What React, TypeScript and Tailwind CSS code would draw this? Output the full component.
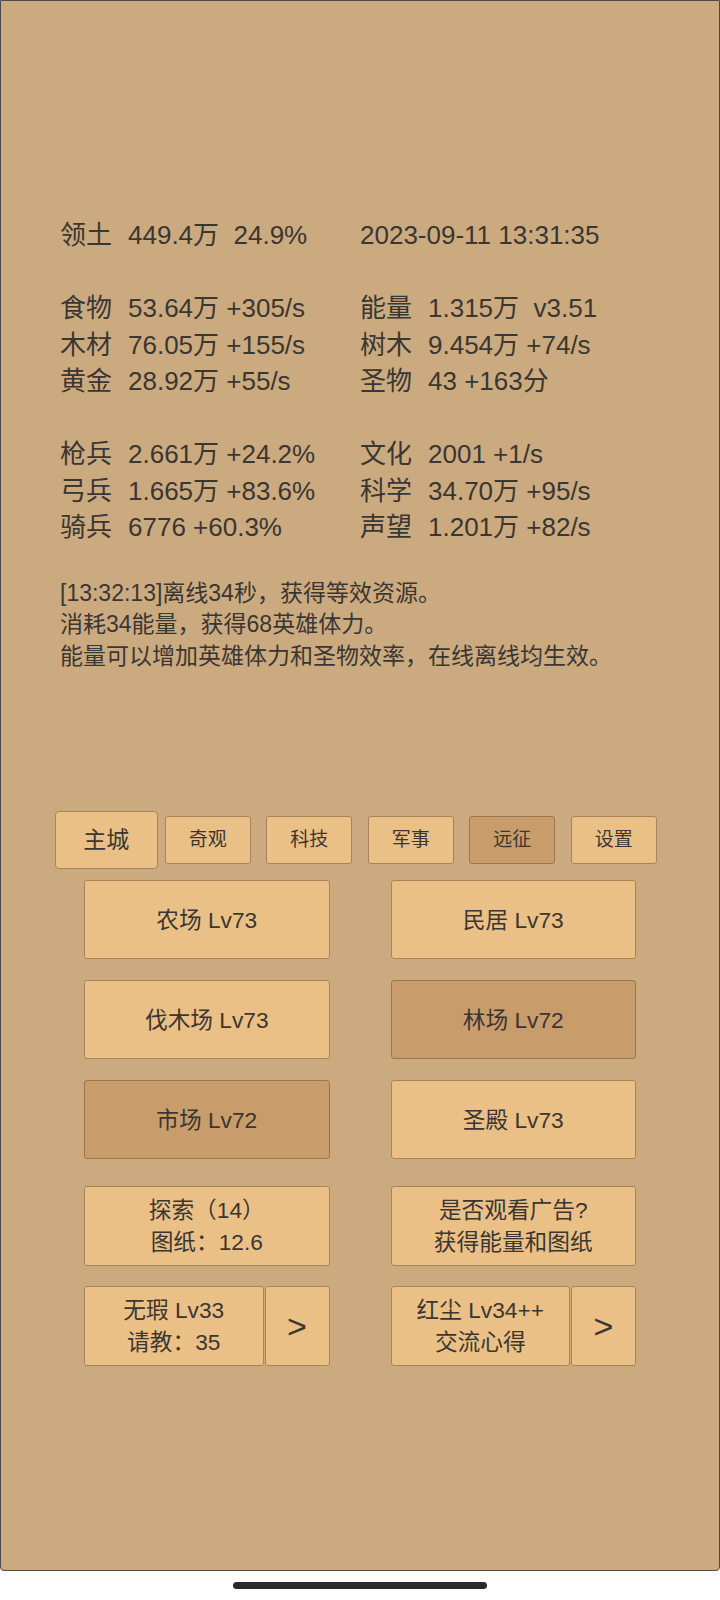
import React from 'react';

type Cell = [string, string] | null;

const rows: (Cell[] | null)[] = [
  [['领土', '449.4万  24.9%'], ['', '2023-09-11 13:31:35']],
  null,
  [['食物', '53.64万 +305/s'], ['能量', '1.315万  v3.51']],
  [['木材', '76.05万 +155/s'], ['树木', '9.454万 +74/s']],
  [['黄金', '28.92万 +55/s'], ['圣物', '43 +163分']],
  null,
  [['枪兵', '2.661万 +24.2%'], ['文化', '2001 +1/s']],
  [['弓兵', '1.665万 +83.6%'], ['科学', '34.70万 +95/s']],
  [['骑兵', '6776 +60.3%'], ['声望', '1.201万 +82/s']],
];

const tabs = ['奇观', '科技', '军事', '远征', '设置'];

const buildings = [
  { name: '农场 Lv73', dark: false },
  { name: '民居 Lv73', dark: false },
  { name: '伐木场 Lv73', dark: false },
  { name: '林场 Lv72', dark: true },
  { name: '市场 Lv72', dark: true },
  { name: '圣殿 Lv73', dark: false },
];

const light = 'bg-[#ebc087] border border-[#a8845a] rounded-[3px]';
const dark = 'bg-[#c99c6b] border border-[#9a7550] rounded-[3px]';

function StatCell({ cell }: { cell: Cell }) {
  if (!cell) return <div />;
  const [label, value] = cell;
  return (
    <div className="flex whitespace-pre">
      {label && <span className="w-[68px] shrink-0">{label}</span>}
      <span>{value}</span>
    </div>
  );
}

export default function App() {
  return (
    <div
      className="w-[720px] bg-white text-[#3a3632]"
      style={{ fontFamily: '"Liberation Sans", "Noto Sans CJK SC", sans-serif' }}
    >
      <div className="h-[1571px] border border-[#4a4a4a] bg-[#cbaa80] rounded-b-[4px] pt-[216px]">
        <div className="pl-[59px] text-[26px] leading-[36.5px]">
          {rows.map((r, i) =>
            r ? (
              <div key={i} className="grid grid-cols-[300px_1fr]">
                <StatCell cell={r[0]} />
                <StatCell cell={r[1]} />
              </div>
            ) : (
              <div key={i} className="h-[36.5px]" />
            )
          )}
        </div>

        <div className="pl-[59px] mt-[32px] text-[23px] leading-[31.6px]">
          <div>[13:32:13]离线34秒，获得等效资源。</div>
          <div>消耗34能量，获得68英雄体力。</div>
          <div>能量可以增加英雄体力和圣物效率，在线离线均生效。</div>
        </div>

        <div className="mt-[139px] flex justify-center">
          <div className="w-[101.5px] h-[58px] flex justify-center items-center">
            <button className={`${light} w-[103px] h-[58px] shrink-0 text-[23px] rounded-[4px]`}>主城</button>
          </div>
          {tabs.map((t) => (
            <div key={t} className="w-[101.5px] h-[58px] flex justify-center items-center">
              <button className={`${t === '远征' ? dark : light} w-[86px] h-[48px] text-[19px]`}>{t}</button>
            </div>
          ))}
        </div>

        <div className="mt-[11px] mx-auto w-[552px] grid grid-cols-2 gap-x-[61px] gap-y-[21px]">
          {buildings.map((b) => (
            <button key={b.name} className={`${b.dark ? dark : light} h-[79px] text-[22.7px]`}>
              {b.name}
            </button>
          ))}
        </div>

        <div className="mt-[27px] mx-auto w-[552px] grid grid-cols-2 gap-x-[61px] text-[22.7px] leading-[32px]">
          <button className={`${light} h-[80px]`}>
            <div>探索（14）</div>
            <div>图纸：12.6</div>
          </button>
          <button className={`${light} h-[80px]`}>
            <div>是否观看广告?</div>
            <div>获得能量和图纸</div>
          </button>
        </div>

        <div className="mt-[20px] mx-auto w-[552px] grid grid-cols-2 gap-x-[61px] text-[22.7px] leading-[32px]">
          <div className="flex gap-[1px] h-[80px]">
            <button className={`${light} flex-1`}>
              <div>无瑕 Lv33</div>
              <div>请教：35</div>
            </button>
            <button className={`${light} w-[65px] text-[34px] font-light`}>&gt;</button>
          </div>
          <div className="flex gap-[1px] h-[80px]">
            <button className={`${light} flex-1`}>
              <div>红尘 Lv34++</div>
              <div>交流心得</div>
            </button>
            <button className={`${light} w-[65px] text-[34px] font-light`}>&gt;</button>
          </div>
        </div>
      </div>
      <div className="h-[29px] flex justify-center pt-[11px]">
        <div className="w-[254px] h-[7px] rounded-full bg-[#2a2a2a]" />
      </div>
    </div>
  );
}
